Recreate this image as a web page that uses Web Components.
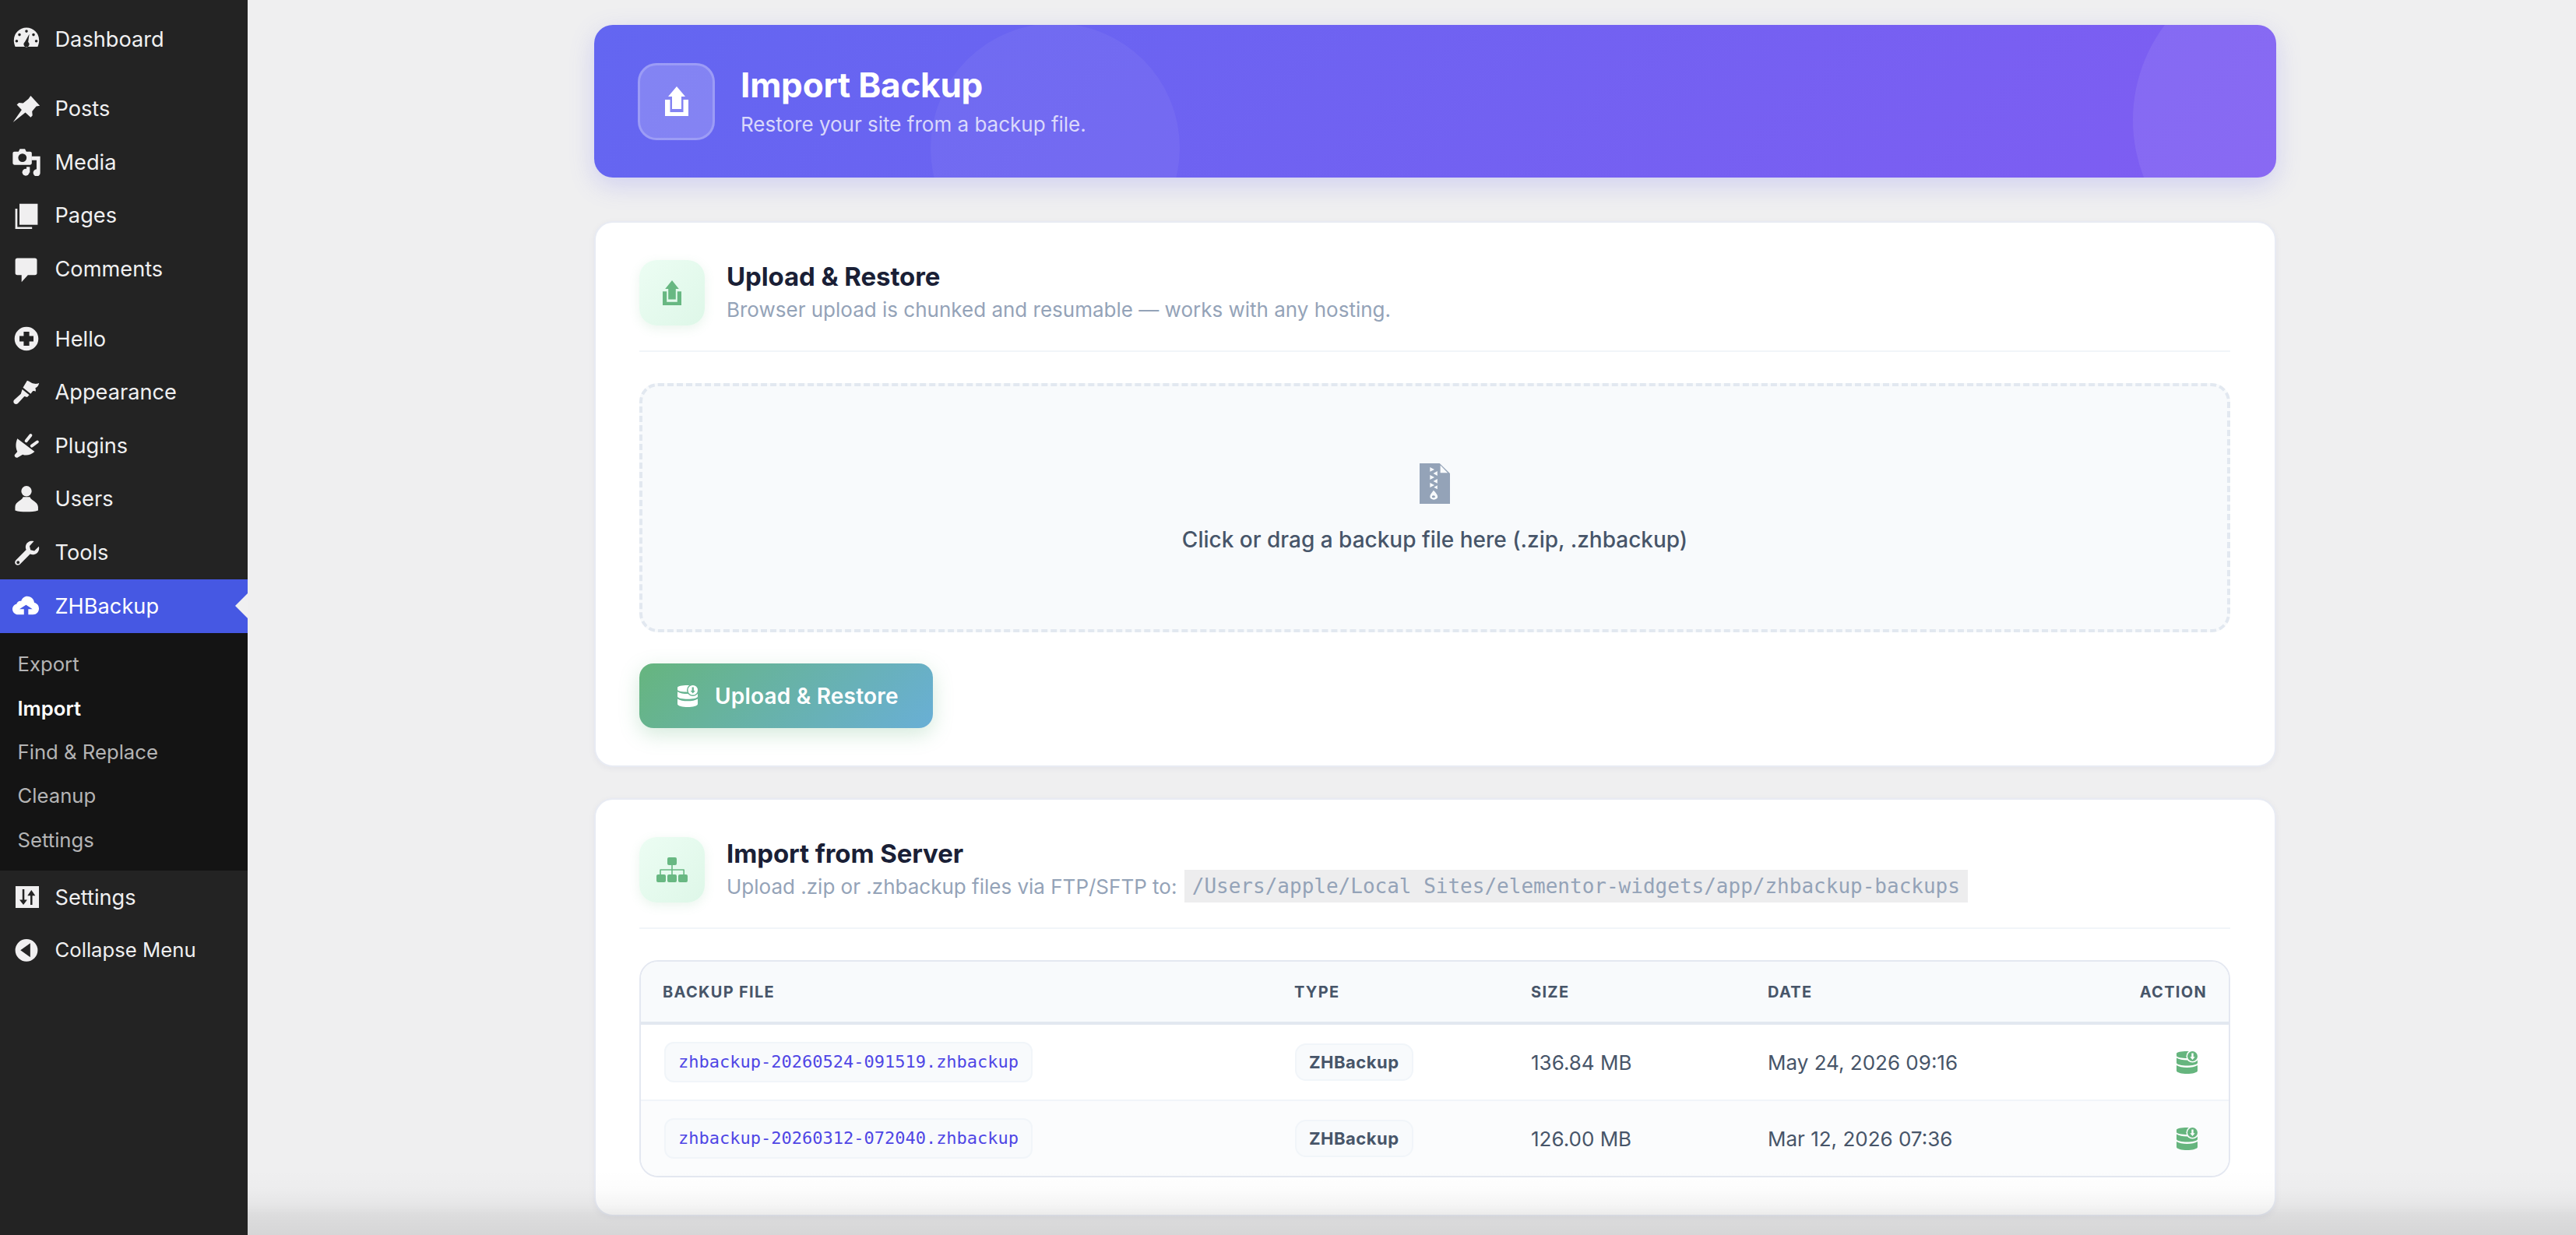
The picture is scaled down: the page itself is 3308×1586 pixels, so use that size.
<!DOCTYPE html>
<html><head><meta charset="utf-8"><style>
html,body{margin:0;height:100%;overflow:hidden;background:#efeff0;font-family:Inter,"Liberation Sans",sans-serif}
</style></head><body>
<zb-app>
<zb-sidebar slot="side"></zb-sidebar>
<zb-hero title="Import Backup" sub="Restore your site from a backup file."></zb-hero>
<zb-card title="Upload &amp; Restore" icon="upload">
<span slot="sub">Browser upload is chunked and resumable — works with any hosting.</span>
<zb-drop></zb-drop>
<zb-button>Upload &amp; Restore</zb-button>
</zb-card>
<zb-card title="Import from Server" icon="tree">
<span slot="sub">Upload .zip or .zhbackup files via FTP/SFTP to: <code style="font:26px 'DejaVu Sans Mono',monospace;background:#ededee;padding:6px 10px;margin-left:2px;vertical-align:1px">/Users/apple/Local Sites/elementor-widgets/app/zhbackup-backups</code></span>
<zb-table></zb-table>
</zb-card>
</zb-app>
<script>
const ICONS={
dash:'<path d="M10 2a9 9 0 0 0-9 9c0 1.700.4 3.200 1 4.500h16c.6-1.300 1-2.800 1-4.500a9 9 0 0 0-9-9zm0 1.500a1 1 0 1 1 0 2 1 1 0 0 1 0-2zM5 6a1 1 0 1 1 0 2 1 1 0 0 1 0-2zm10 0a1 1 0 1 1 0 2 1 1 0 0 1 0-2zM3 10.500a1 1 0 1 1 0 2 1 1 0 0 1 0-2zm14 0a1 1 0 1 1 0 2 1 1 0 0 1 0-2zM12 6.500l-.8 5.700a2 2 0 1 1-2.400 0z" fill-rule="evenodd"/>',
pin:'<path d="M13 .5l6.500 7.200-2.500.4-3 3.600.3 2.900-1.300 1.400-3.800-3.500L.4 19.400l6.200-8.800-3.500-3.600L4.600 5.600l3 .2 3.800-3z"/>',
media:'<path d="M1.400 2.600h2.900l1-1.900h3.600l1 1.900h2.700a1.200 1.200 0 0 1 1.200 1.200v7.100a1.200 1.200 0 0 1-1.200 1.200H1.400A1.200 1.200 0 0 1 .2 10.900V3.800a1.200 1.200 0 0 1 1.200-1.200zm5.700 1.400a3 3 0 1 0 0 6 3 3 0 0 0 0-6z" fill-rule="evenodd"/><path d="M13.600 6h6.200v11.600a2.500 2.500 0 1 1-2.600-2.400V8.800h-3.600z"/><circle cx="9.500" cy="17.300" r="2.500"/><path d="M10 13.500h2.400v4h-2.400z"/>',
pages:'<path d="M5 1.500h13v15H5z"/><path d="M2 5h1.500v13H14v1.500H2z"/>',
comments:'<path d="M3.500 2h12.500a1.500 1.500 0 0 1 1.500 1.500v9a1.500 1.500 0 0 1-1.500 1.500H11l-4.500 5v-5H3.500A1.500 1.500 0 0 1 2 12.500v-9A1.500 1.500 0 0 1 3.500 2z"/>',
hello:'<path d="M10 1.500a8.500 8.500 0 1 0 0 17 8.500 8.500 0 0 0 0-17zM8 5h4v3h3v4h-3v3H8v-3H5V8h3z" fill-rule="evenodd"/>',
brush:'<path d="M10.500 1.500c2 .6 3 2 5.500 2.300 1.200.1 2-.2 3-.5-.5 2-1.500 3-2.700 3.500.3.800.4 1.500.2 2.500-.6-.4-1.200-.5-2-.3l-1.500 2-5.500-4.500zM7 7.800l5 4-1.500 1.500-2-.5-4.600 5c-.7.700-1.900.7-2.700 0-.7-.8-.6-2 .2-2.600L6 11z"/>',
plug:'<path d="M3.500 5.200L15.800 14.500C13 17 9.500 17.500 7.300 16.500L3.500 18.700C2.500 19 1.200 18 1.500 16.800L3.500 14.500C2 11.500 2.300 8 3.500 5.200Z"/><path fill="none" stroke="currentColor" stroke-width="2.200" stroke-linecap="round" d="M9.800 6.800L13 2.800M13.800 10.300L17.700 7.500"/>',
user:'<circle cx="10" cy="4.300" r="3.700"/><path d="M7.500 8.500C7.300 11 2 11.500 1.900 15.500V18C4 18.800 7 19 10 19S16 18.800 18.300 18V15.500C18 11.500 12.800 11 12.500 8.500Z"/>',
tools:'<path d="M15.300 1.700c-2.300-.7-5 .4-5.700 2.800-.4 1.100-.3 2.400.2 3.300L2.500 15.200c-1 1-.9 2.300-.2 3 .8.800 2.100.8 3 0l7.300-7.300c1.100.5 2.300.5 3.400.1 2.300-.8 3.500-3.200 2.800-5.600l-3.200 3.200-2.700-.7-.7-2.700zM4 15.700a1.100 1.100 0 1 1 0 2.200 1.100 1.100 0 0 1 0-2.200z" fill-rule="evenodd"/>',
cloud:'<path d="M10.500 3.200C13.500 3.200 15.300 5.300 15.600 7.800C17.500 8.200 18.900 9.800 18.900 12C18.900 14.500 17 16.300 14.700 16.300H11.300V12.300H14.300L9.700 9.300L5 12.300H8.200V16.300H4C1.800 16.300 0 14.500 0 12.400C0 10.600 1.200 9.200 2.900 8.800C3.200 7.300 4.600 6.300 6.200 6.600C6.900 4.600 8.500 3.200 10.500 3.200Z"/>',
sliders:'<path fill-rule="evenodd" d="M2.200 2.200H18.900V17.800H2.200ZM7.100 4.500V12H5L7.800 15.500 10.500 12H8.500V4.500ZM13.500 5L10.700 9H12.800V15.500H14.200V9H16.300Z"/>',
collapse:'<path d="M10 2.200a8 8 0 1 0 0 16 8 8 0 0 0 0-16zm2.700 3v10l-7-5z" fill-rule="evenodd"/>'
};
const GRAPH={
upload:['0 0 30 38','<path d="M15 0L26 13h-5v16H9V13H4z"/><path d="M0 17h6.500v16h17V17H30v21H0z"/>'],
tree:['0 0 40 32','<rect x="14" y="0" width="12" height="10" rx="2"/><rect x="0" y="22" width="12" height="10" rx="2"/><rect x="14" y="22" width="12" height="10" rx="2"/><rect x="28" y="22" width="12" height="10" rx="2"/><path d="M19.200 10h1.600v5.200h14.200a1 1 0 0 1 1 1V22h-1.600v-5.200H20.800V22h-1.600v-5.200H5.800V22H4.200v-5.800a1 1 0 0 1 1-1h14z"/>'],
db:['0 0 27 29','<mask id="m"><rect width="27" height="29" fill="#fff"/><circle cx="20.500" cy="6.500" r="8" fill="#000"/></mask><g mask="url(#m)"><path d="M0 3C0 1 6 0 13.500 0S27 1 27 3V6C27 8 20 9 13.500 9S0 8 0 6Z"/><path d="M0 8.500C3 10.500 8 11.500 13.500 11.500S24 10.500 27 8.500V15C27 17 20 18.500 13.500 18.500S0 17 0 15Z"/></g><path d="M0 18C3 20 8 21 13.500 21S24 20 27 18V25C27 27.500 20 29 13.500 29S0 27.500 0 25Z"/><path fill-rule="evenodd" d="M20.500 0a6.500 6.500 0 1 1 0 13 6.500 6.500 0 0 1 0-13zM19.300 2.500v4.700h-2l3.200 3.800 3.200-3.800h-2V2.500z"/>'],
zip:['0 0 20.500 36','<path fill-rule="evenodd" d="M0 0H13.500L20.500 9V36H0ZM14 1.800V8.500H19ZM7 3.500V7.500L10 5.500ZM12 6.900V11L9.200 9ZM7 10.400V14.500L10 12.500ZM12 13.800V17.900L9.200 15.900ZM7 17.300V21.400L10 19.400ZM12 19.500V23L9.600 21.300ZM9.400 24C8 26.500 7 27.800 7 29.700a2.600 2.600 0 0 0 5.200 0C12.200 27.800 10.800 26 9.400 24ZM9.400 28.500a1.100 1.100 0 1 1 0 2.200 1.100 1.100 0 0 1 0-2.200Z"/>']
};
const svg=(n,s)=>`<svg width="${s}" height="${s}" viewBox="0 0 20 20" fill="currentColor">${ICONS[n]}</svg>`;
const gfx=(n,w,h)=>`<svg width="${w}" height="${h}" viewBox="${GRAPH[n][0]}" preserveAspectRatio="none" fill="currentColor" style="display:block">${GRAPH[n][1]}</svg>`;
function def(name,css,html){customElements.define(name,class extends HTMLElement{constructor(){super();this.attachShadow({mode:'open'});}connectedCallback(){if(!this.shadowRoot.firstChild)this.shadowRoot.innerHTML='<style>'+css+'</style>'+(typeof html==='function'?html(this):html);}});}

def('zb-app',`:host{display:grid;grid-template-columns:318px 1fr;height:1586px;position:relative;overflow:hidden}
main{padding:32px 385px 0 445px;display:flex;flex-direction:column;min-width:0}
.fade{position:absolute;left:318px;right:0;bottom:0;height:84px;background:linear-gradient(rgba(0,0,0,0) 0,rgba(0,0,0,.01) 30%,rgba(0,0,0,.04) 54%,rgba(0,0,0,.08) 69%,rgba(0,0,0,.105) 100%);pointer-events:none}`,
`<slot name="side"></slot><main><slot></slot></main><div class="fade"></div>`);

def('zb-menu-item',`:host{display:flex;align-items:center;height:68.6px;flex:none;color:#f0f0f1;font-size:27.2px;padding-left:16px;gap:18.5px;position:relative;line-height:1}
:host([active]){background:#4658e3;color:#fff}
:host([small]){font-size:25.700px;height:66.600px}
.i{width:36px;height:36px;display:flex;align-items:center;justify-content:center;color:#f0eff0}
:host([active]) .i{color:#fff}
.arrow{position:absolute;right:0;top:50%;margin-top:-16px;border:16px solid transparent;border-left-width:0;border-right:16px solid #f0f0f1}`,
h=>`<span class="i">${svg(h.getAttribute('icon'),36)}</span><slot></slot>${h.hasAttribute('active')?'<span class="arrow"></span>':''}`);

def('zb-sub-item',`:host{display:flex;align-items:center;height:56.3px;padding-left:22.500px;font-size:25.7px;color:#b4b4b5;line-height:1}
:host([current]){color:#fff;font-weight:600}`,`<slot></slot>`);

def('zb-sidebar',`:host{display:flex;flex-direction:column;background:#232323;padding-top:16px;height:1586px;box-sizing:border-box}
.sep{height:21px;flex:none}.sub{background:#141414;padding:12.500px 0 11.500px}`,
`<zb-menu-item icon="dash">Dashboard</zb-menu-item><div class="sep"></div>
<zb-menu-item icon="pin">Posts</zb-menu-item><zb-menu-item icon="media">Media</zb-menu-item><zb-menu-item icon="pages">Pages</zb-menu-item><zb-menu-item icon="comments">Comments</zb-menu-item><div class="sep"></div>
<zb-menu-item icon="hello">Hello</zb-menu-item><zb-menu-item icon="brush">Appearance</zb-menu-item><zb-menu-item icon="plug">Plugins</zb-menu-item><zb-menu-item icon="user">Users</zb-menu-item><zb-menu-item icon="tools">Tools</zb-menu-item>
<zb-menu-item icon="cloud" active>ZHBackup</zb-menu-item>
<div class="sub"><zb-sub-item>Export</zb-sub-item><zb-sub-item current>Import</zb-sub-item><zb-sub-item>Find &amp; Replace</zb-sub-item><zb-sub-item>Cleanup</zb-sub-item><zb-sub-item>Settings</zb-sub-item></div>
<zb-menu-item icon="sliders">Settings</zb-menu-item><zb-menu-item icon="collapse" small>Collapse Menu</zb-menu-item>`);

def('zb-hero',`:host{display:flex;align-items:center;height:196px;flex:none;box-sizing:border-box;margin:0 0 56px;padding-left:56px;gap:33px;border-radius:24px;position:relative;overflow:hidden;background:linear-gradient(135deg,#6366f1,#7f5df2);color:#fff;box-shadow:0 10px 32px rgba(99,102,241,.22)}
.box{width:99px;height:99px;box-sizing:border-box;border-radius:24px;background:rgba(255,255,255,.2);border:3px solid rgba(255,255,255,.2);display:flex;align-items:center;justify-content:center;flex:none;position:relative}
h1{margin:0;font-size:44px;font-weight:700;line-height:52px;letter-spacing:-.2px}
p{margin:7px 0 0;font-size:26px;line-height:36px;color:rgba(255,255,255,.75)}
.c1,.c2{position:absolute;border-radius:50%}
.c1{width:320px;height:320px;left:432px;top:-2px;background:rgba(255,255,255,.05)}
.c2{width:404px;height:404px;left:1976px;top:-80px;background:rgba(255,255,255,.08)}`,
h=>`<div class="c1"></div><div class="c2"></div><div class="box">${gfx('upload',30,38)}</div><div style="position:relative;z-index:1"><h1>${h.getAttribute('title')}</h1><p>${h.getAttribute('sub')}</p></div>`);

def('zb-card',`:host{display:block;flex:none;background:#fff;border:2px solid #e8ebf3;border-radius:24px;padding:48px 57px 48px 56px;margin-bottom:40px;box-sizing:border-box;box-shadow:0 2px 8px rgba(30,40,90,.05)}
header{display:flex;align-items:center;gap:28px;padding-bottom:32px;border-bottom:2px solid #f1f5f9;margin-bottom:40px}
.box{width:84px;height:84px;border-radius:22px;background:linear-gradient(135deg,#ecfdf3,#def7e8);color:#68b882;display:flex;align-items:center;justify-content:center;flex:none;box-shadow:0 4px 14px rgba(104,184,130,.14)}
h2{margin:0;font-size:33px;font-weight:700;color:#1a1f36;line-height:42px;letter-spacing:-.1px}
.s{font-size:26px;color:#94a3b8;line-height:40px;margin-top:2px;white-space:nowrap}`,
h=>{const t=h.getAttribute('icon')==='tree';return `<header><div class="box">${t?gfx('tree',40,32):gfx('upload',24,32)}</div><div><h2>${h.getAttribute('title')}</h2><div class="s"><slot name="sub"></slot></div></div></header><slot></slot>`});

def('zb-drop',`:host{display:flex;flex-direction:column;align-items:center;justify-content:center;height:320px;box-sizing:border-box;padding-top:1px;background:#f8fafc;border:4px dashed #e2e8f0;border-radius:24px;color:#475569;font-size:28px;font-weight:500}
div{margin-bottom:29px;color:#94a3b8}`,
`<div>${gfx('zip',39,52)}</div><slot>Click or drag a backup file here (.zip, .zhbackup)</slot>`);

def('zb-button',`:host{display:flex;align-items:center;gap:22px;margin-top:40px;height:83px;width:377px;box-sizing:border-box;padding-left:49px;border-radius:18px;background:linear-gradient(135deg,#66b57e,#69afd6);color:#fff;font-size:28px;font-weight:600;box-shadow:0 8px 26px rgba(102,181,126,.28);letter-spacing:.2px}`,
`${gfx('db',26,28)}<slot></slot>`);

const row=(f,s,d)=>`<div class="r"><div><span class="file">${f}</span></div><div><span class="type">ZHBackup</span></div><div>${s}</div><div>${d}</div><div class="c5">${gfx('db',27,29)}</div></div>`;
def('zb-table',`:host{display:block;border:2px solid #e4e8f1;border-radius:24px;overflow:hidden;font-size:26px;color:#475569}
.r,.h{display:grid;grid-template-columns:811px 304px 304px 1fr 120px;padding-left:28px;padding-right:28px;align-items:center}
.h{height:77px;background:#f8fafc;border-bottom:4px solid #e2e8f0;font-size:20px;font-weight:700;letter-spacing:1.3px;color:#475569}
.h div:last-child{text-align:right}
.r{height:96px;border-bottom:2px solid #f1f5f9}
.r:last-child{border-bottom:0;background:#fbfcfd}
.file{display:inline-block;font:22px/48px 'DejaVu Sans Mono',monospace;color:#4f46e5;background:#f8fafc;border:2px solid #f1f5f9;border-radius:12px;padding:0 16px;margin-left:2px}
.type{display:inline-block;font-size:22px;font-weight:700;line-height:44px;letter-spacing:.5px;background:#f8fafc;border:2px solid #f1f5f9;border-radius:14px;padding:0 16px;margin-left:1px;color:#475569;vertical-align:middle}
.c5{color:#66b57e;display:flex;justify-content:flex-end;padding-right:12px}`,
`<div class="h"><div>BACKUP FILE</div><div>TYPE</div><div>SIZE</div><div>DATE</div><div>ACTION</div></div>`+
row('zhbackup-20260524-091519.zhbackup','136.84 MB','May 24, 2026 09:16')+row('zhbackup-20260312-072040.zhbackup','126.00 MB','Mar 12, 2026 07:36'));
</script>
</body></html>
